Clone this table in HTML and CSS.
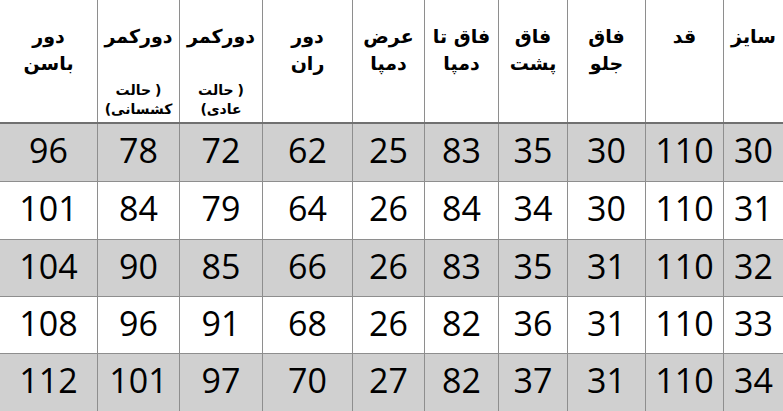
FILE: index.html
```html
<!DOCTYPE html>
<html lang="fa" dir="rtl">
<head>
<meta charset="utf-8">
<link rel="stylesheet" href="styles.css">
</head>
<body>
<div class="table">
  <div class="row head">
    <div class="cell"><div class="h">سایز</div></div>
    <div class="cell"><div class="h">قد</div></div>
    <div class="cell"><div class="h">فاق</div><div class="h">جلو</div></div>
    <div class="cell"><div class="h">فاق</div><div class="h">پشت</div></div>
    <div class="cell"><div class="h">فاق تا</div><div class="h">دمپا</div></div>
    <div class="cell"><div class="h">عرض</div><div class="h">دمپا</div></div>
    <div class="cell"><div class="h">دور</div><div class="h">ران</div></div>
    <div class="cell"><div class="h">دورکمر</div>
      <div class="sub">
        <div class="ln"><span>حالت</span><span class="p">)</span></div>
        <div class="ln"><span>(</span><span>عادی</span></div>
      </div>
    </div>
    <div class="cell"><div class="h">دورکمر</div>
      <div class="sub">
        <div class="ln"><span>حالت</span><span class="p">)</span></div>
        <div class="ln"><span>(</span><span>کشسانی</span></div>
      </div>
    </div>
    <div class="cell"><div class="h">دور</div><div class="h">باسن</div></div>
  </div>
  <div class="row data shade">
    <div class="cell">30</div><div class="cell">110</div><div class="cell">30</div><div class="cell">35</div><div class="cell">83</div><div class="cell">25</div><div class="cell">62</div><div class="cell">72</div><div class="cell">78</div><div class="cell">96</div>
  </div>
  <div class="row data">
    <div class="cell">31</div><div class="cell">110</div><div class="cell">30</div><div class="cell">34</div><div class="cell">84</div><div class="cell">26</div><div class="cell">64</div><div class="cell">79</div><div class="cell">84</div><div class="cell">101</div>
  </div>
  <div class="row data shade">
    <div class="cell">32</div><div class="cell">110</div><div class="cell">31</div><div class="cell">35</div><div class="cell">83</div><div class="cell">26</div><div class="cell">66</div><div class="cell">85</div><div class="cell">90</div><div class="cell">104</div>
  </div>
  <div class="row data">
    <div class="cell">33</div><div class="cell">110</div><div class="cell">31</div><div class="cell">36</div><div class="cell">82</div><div class="cell">26</div><div class="cell">68</div><div class="cell">91</div><div class="cell">96</div><div class="cell">108</div>
  </div>
  <div class="row data shade last">
    <div class="cell">34</div><div class="cell">110</div><div class="cell">31</div><div class="cell">37</div><div class="cell">82</div><div class="cell">27</div><div class="cell">70</div><div class="cell">97</div><div class="cell">101</div><div class="cell">112</div>
  </div>
</div>
</body>
</html>
```

FILE: styles.css
```css
html, body {
  margin: 0;
  padding: 0;
  background: #ffffff;
}

.table {
  width: 783px;
  direction: rtl;
}

.row {
  display: grid;
  grid-template-columns: 60px 78px 78px 69px 74px 72px 90px 83px 82px 97px;
  box-sizing: border-box;
  border-bottom: 1px solid #8e8e8e;
}

.row.head {
  height: 124px;
  border-bottom: 2px solid #707070;
}

.row.data {
  height: 58px;
  font-family: "Open Sans", "DejaVu Sans", sans-serif;
  font-size: 34px;
  color: #000;
}

.row.data:nth-child(n+4) {
  height: 57px;
}

.row.last {
  border-bottom: none;
}

.row.shade {
  background: #d0d0d0;
}

.cell {
  box-sizing: border-box;
  border-left: 1px solid #8e8e8e;
  text-align: center;
}

.cell:last-child {
  border-left: none;
}

.data .cell {
  display: flex;
  align-items: center;
  justify-content: center;
  line-height: 1;
  padding-bottom: 5px;
}

.head .cell {
  padding-top: 23px;
  font-family: "DejaVu Sans", sans-serif;
  font-weight: bold;
  color: #000;
}

.h {
  font-size: 19px;
  line-height: 27px;
}

.sub {
  margin-top: 31px;
  font-size: 14px;
  line-height: 19px;
}

.ln {
  direction: ltr;
  display: flex;
  justify-content: center;
}

.ln span {
  display: block;
}

.ln .p {
  margin-left: 4px;
}
```
